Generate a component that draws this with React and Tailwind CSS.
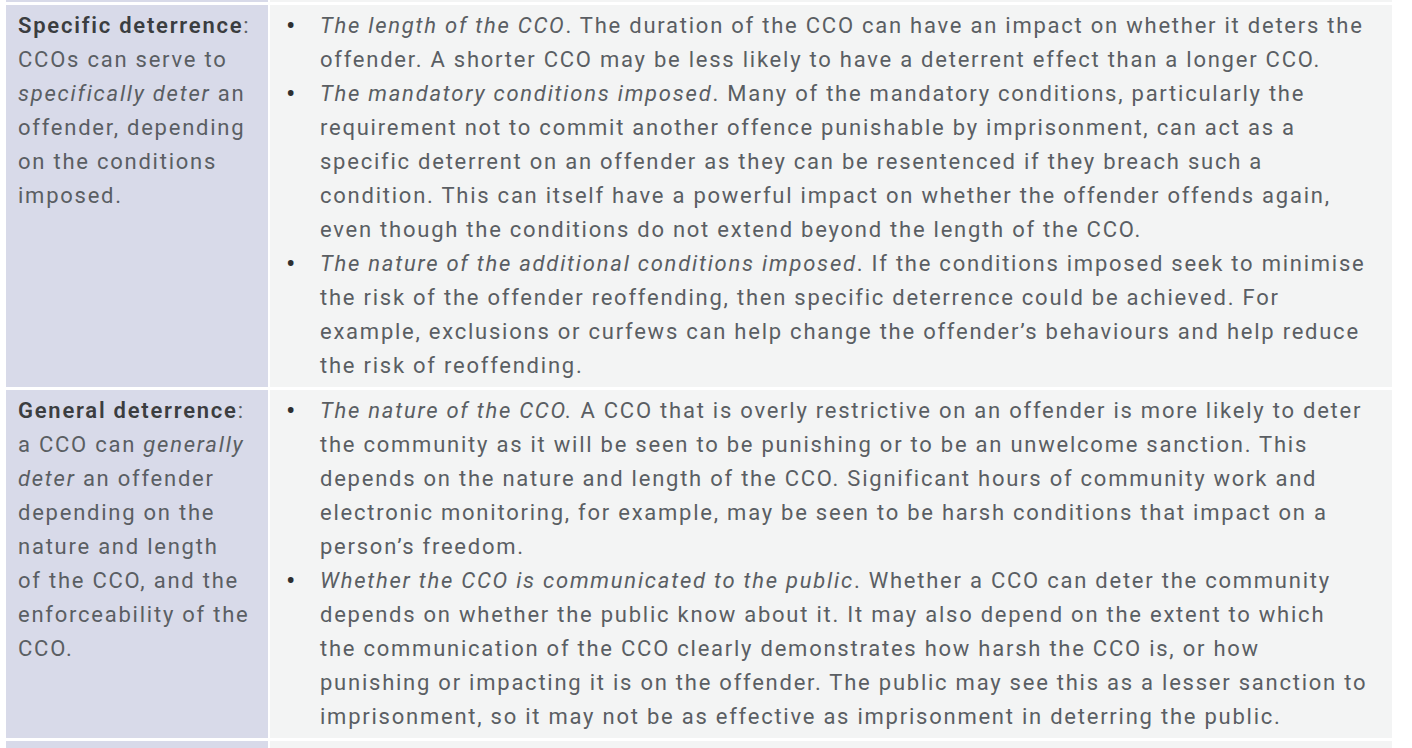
export default function App() {
  const rows = [
    {
      head: (
        <>
          <span className="font-semibold text-[#3b3d40]">Specific deterrence</span>:
          CCOs can serve to <em>specifically deter</em> an offender, depending on the conditions imposed.
        </>
      ),
      items: [
        <>
          <em>The length of the CCO</em>. The duration of the CCO can have an impact on whether it deters the
          offender. A shorter CCO may be less likely to have a deterrent effect than a longer CCO.
        </>,
        <>
          <em>The mandatory conditions imposed</em>. Many of the mandatory conditions, particularly the
          requirement not to commit another offence punishable by imprisonment, can act as a specific deterrent
          on an offender as they can be resentenced if they breach such a condition. This can itself have a
          powerful impact on whether the offender offends again, even though the conditions do not extend beyond
          the length of the CCO.
        </>,
        <>
          <em>The nature of the additional conditions imposed</em>. If the conditions imposed seek to minimise
          the risk of the offender reoffending, then specific deterrence could be achieved. For example,
          exclusions or curfews can help change the offender’s behaviours and help reduce the risk of
          reoffending.
        </>,
      ],
    },
    {
      head: (
        <>
          <span className="font-semibold text-[#3b3d40]">General deterrence</span>: a CCO can{' '}
          <em>generally deter</em> an offender depending on the nature and length
          <br />
          of the CCO, and the enforceability of the CCO.
        </>
      ),
      items: [
        <>
          <em>The nature of the CCO.</em> A CCO that is overly restrictive on an offender is more likely to
          deter the community as it will be seen to be punishing or to be an unwelcome sanction. This depends on
          the nature and length of the CCO. Significant hours of community work and electronic monitoring, for
          example, may be seen to be harsh conditions that impact on a person’s freedom.
        </>,
        <>
          <em>Whether the CCO is communicated to the public</em>. Whether a CCO can deter the community depends
          on whether the public know about it. It may also depend on the extent to which
          <br />
          the communication of the CCO clearly demonstrates how harsh the CCO is, or how
          <br />
          punishing or impacting it is on the offender. The public may see this as a lesser sanction to
          imprisonment, so it may not be as effective as imprisonment in deterring the public.
        </>,
      ],
    },
  ];

  return (
    <div className="h-[748px] overflow-hidden bg-white pl-[6px] pr-[20px] font-['Roboto',sans-serif] text-[22px] leading-[34px] tracking-[0.08em] text-[#5a5e63]">
      <div className="grid grid-cols-[262px_1fr] gap-x-[2px] gap-y-[3px] -mt-px">
        <div className="h-[3px] bg-[#d8dae9]" />
        <div className="h-[3px] bg-[#f3f4f4]" />
        {rows.map((row, i) => (
          <div key={i} className="contents">
            <div className="bg-[#d8dae9] pl-[12px] pr-[4px] pt-[4px] pb-[4px]">{row.head}</div>
            <div className="bg-[#f3f4f4] pl-[50px] pr-[10px] pt-[4px] pb-[4px]">
              <ul>
                {row.items.map((item, j) => (
                  <li key={j} className="relative">
                    <span className="absolute -left-[34px] top-0 text-[28px] leading-[34px] text-[#2d2f31]">•</span>
                    {item}
                  </li>
                ))}
              </ul>
            </div>
          </div>
        ))}
        <div className="h-[20px] bg-[#d8dae9]" />
        <div className="h-[20px] bg-[#f3f4f4]" />
      </div>
    </div>
  );
}
